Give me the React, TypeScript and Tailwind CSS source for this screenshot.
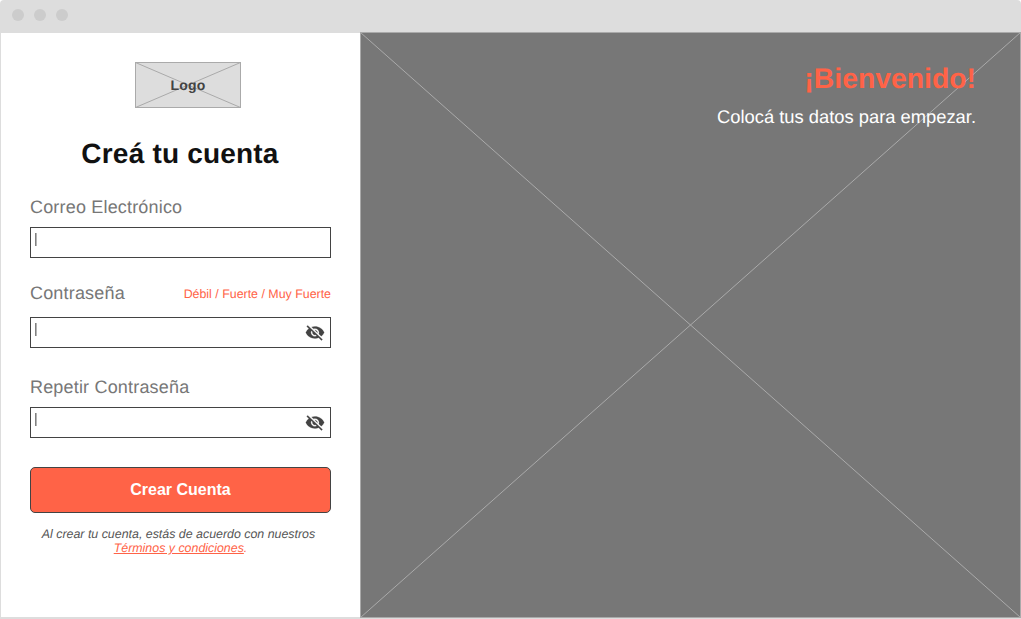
import React from "react";
import { MdVisibilityOff } from "react-icons/md";

function Placeholder({ width, height, stroke }: { width: number; height: number; stroke: string }) {
  return (
    <svg
      className="absolute inset-0 h-full w-full"
      viewBox={`0 0 ${width} ${height}`}
      fill="none"
      stroke={stroke}
      aria-hidden="true"
    >
      <rect x="0.5" y="0.5" width={width - 1} height={height - 1} />
      <path d={`M0.5 0.5L${width - 0.5} ${height - 0.5}M${width - 0.5} 0.5L0.5 ${height - 0.5}`} />
    </svg>
  );
}

function Field({ secret = false }: { secret?: boolean }) {
  return (
    <div className="flex h-[31px] justify-between border border-[#434343] bg-white pr-[5px] pl-1">
      <span className="mt-[5px] h-[13px] w-0.5 border-r border-[#b5b5b5] bg-[#808080]" />
      {secret && (
        <MdVisibilityOff
          className="mt-[5px] h-[19px] w-5 text-[#434343] [&_path:last-child]:stroke-[#434343] [&_path:last-child]:stroke-[0.3]"
          preserveAspectRatio="none"
          strokeWidth="0"
        />
      )}
    </div>
  );
}

function Label({ children }: { children: React.ReactNode }) {
  return <label className="text-[18px] leading-5 tracking-[0.18px] text-[#777777]">{children}</label>;
}

export default function App() {
  return (
    <div className="flex h-[619px] w-[1021px] flex-col overflow-hidden bg-white font-['Liberation_Sans',Arial,sans-serif] [text-rendering:geometricPrecision]">
      <header className="flex h-8 shrink-0 gap-2.5 rounded-t-[4px] bg-[#dddddd] pt-[9px] pl-3">
        <span className="size-3 rounded-full bg-[#cccccc]" />
        <span className="size-3 rounded-full bg-[#cccccc]" />
        <span className="size-3 rounded-full bg-[#cccccc]" />
      </header>
      <main className="flex h-[587px] border-b-2 border-[#dddddd]">
        <section className="flex w-[360px] flex-col border-t border-l border-[#dddddd] pt-[29px] pr-[29px] pl-[29px]">
          <div className="relative ml-[105px] flex h-[46px] w-[106px] items-center justify-center bg-[#dddddd]">
            <Placeholder width={106} height={46} stroke="#aaaaaa" />
            <span className="relative text-[14px] leading-4 font-bold tracking-[0.2px] text-[#434343]">Logo</span>
          </div>
          <h1 className="mt-[30px] -ml-px h-8 text-center text-[28px] leading-8 font-bold tracking-[0.2px] whitespace-nowrap text-[#111111]">
            Creá tu cuenta
          </h1>
          <form className="flex flex-col">
            <div className="mt-[27px] mb-[10px] flex h-5">
              <Label>Correo Electrónico</Label>
            </div>
            <Field />
            <div className="mt-[25px] mb-[14px] flex h-5 items-center justify-between">
              <Label>Contraseña</Label>
              <span className="pt-0.5 text-[12.4px] leading-[14px] whitespace-nowrap text-[#ff6347]">
                Débil / Fuerte / Muy Fuerte
              </span>
            </div>
            <Field secret />
            <div className="mt-[29px] mb-[10px] flex h-5">
              <Label>Repetir Contraseña</Label>
            </div>
            <Field secret />
            <button
              type="button"
              className="mt-[29px] h-[46px] rounded-[5px] border border-[#434343] bg-[#ff6347] text-[16px] leading-5 font-bold text-white"
            >
              Crear Cuenta
            </button>
          </form>
          <p className="mt-[14px] text-center text-[12.4px] leading-[14px] text-[#555555] italic">
            <span className="-ml-1 whitespace-nowrap">Al crear tu cuenta, estás de acuerdo con nuestros</span>
            <br />
            <span className="text-[#ff6347]">
              <a className="underline">Términos y condiciones</a>.
            </span>
          </p>
        </section>
        <section className="relative flex h-[586px] w-[661px] flex-col items-end bg-[#777777] pt-[31px] pr-[45px]">
          <Placeholder width={661} height={586} stroke="#aaaaaa" />
          <h2 className="relative text-[28.35px] leading-8 font-bold text-[#ff6347]">¡Bienvenido!</h2>
          <p className="relative mt-3 text-[18.35px] leading-5 text-white">
            Colocá tus datos para empezar.
          </p>
        </section>
      </main>
    </div>
  );
}
